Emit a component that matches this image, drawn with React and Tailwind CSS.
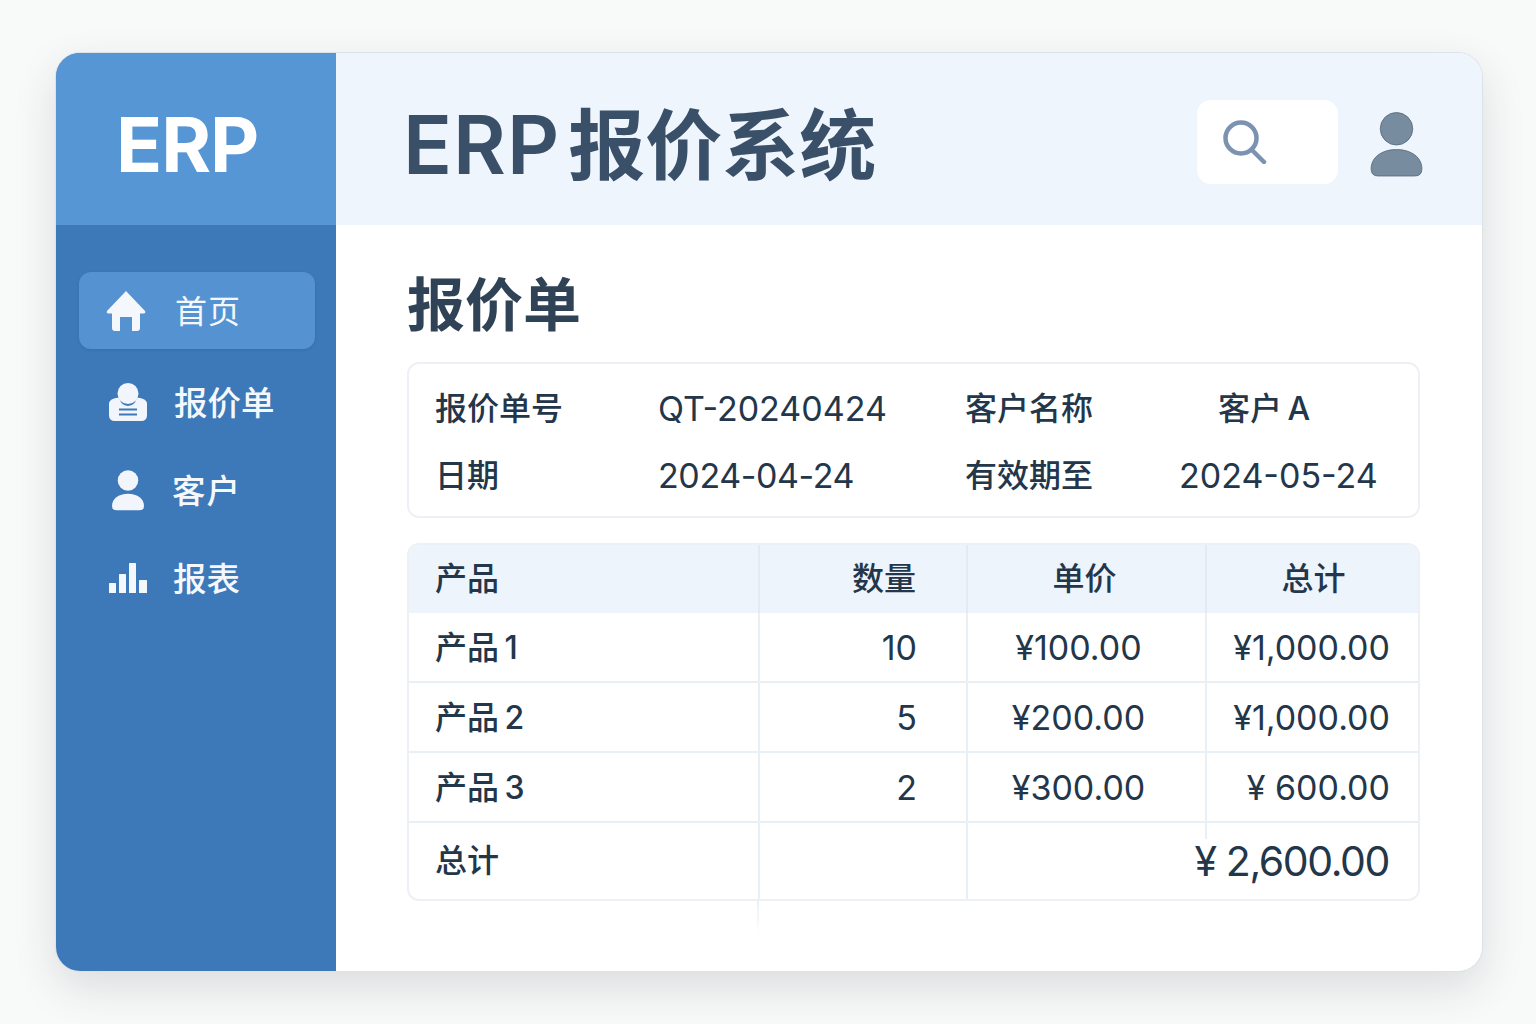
import React from "react";

const font = "font-['Inter','Noto_Sans_CJK_SC',sans-serif]";
const cols = "grid grid-cols-[351px_208px_239px_1fr]";

function HomeIcon() {
  return (
    <svg width="40" height="42" viewBox="0 0 40 42" className="text-[#f4f8fd]">
      <path fill="currentColor" d="M20 1 L39 21 Q40 23.500 37.500 23.500 L34 23.500 L34 38 Q34 41 31 41 L26 41 L26 27 L14 27 L14 41 L9 41 Q6 41 6 38 L6 23.500 L2.500 23.500 Q0 23.500 1 21 Z" />
    </svg>
  );
}
function QuoteIcon() {
  return (
    <svg width="38" height="38" viewBox="0 0 38 38" className="text-[#f2f6fc]">
      <path fill="currentColor" d="M7 15 Q10 14 11 17 Q12 22 19 23 Q26 22 27 17 Q28 14 31 15 Q37 16 38 20 L38 32 Q38 38 32 38 L6 38 Q0 38 0 32 L0 20 Q1 16 7 15 Z" />
      <circle cx="19" cy="10.500" r="10.500" fill="currentColor" />
      <path d="M10 26.500 H28 M10 31.500 H28" stroke="#3d79b8" strokeWidth="1.800" />
    </svg>
  );
}
function UserIcon({ w, h, color, stroke }) {
  return (
    <svg width={w} height={h} viewBox="0 0 52 64" className={color}>
      <circle cx="26" cy="16.500" r="16" fill="currentColor" stroke={stroke || "none"} strokeWidth="0.800" />
      <path fill="currentColor" stroke={stroke || "none"} strokeWidth="0.800" d="M26 37 C41 37 51 45 51 56 Q51 63 44 63 L8 63 Q1 63 1 56 C1 45 11 37 26 37 Z" />
    </svg>
  );
}
function BarsIcon() {
  return (
    <svg width="38" height="30" viewBox="0 0 38 30" className="text-[#f4f8fd]">
      <rect x="0" y="20" width="7" height="10" rx="0.500" fill="currentColor" />
      <rect x="10" y="11" width="7" height="19" rx="0.500" fill="currentColor" />
      <rect x="20" y="0" width="7" height="30" rx="0.500" fill="currentColor" />
      <rect x="30" y="17" width="8" height="13" rx="0.500" fill="currentColor" />
    </svg>
  );
}
function SearchIcon() {
  return (
    <svg width="44" height="44" viewBox="0 0 44 44">
      <circle cx="18" cy="18" r="15.500" fill="none" stroke="#7b93b1" strokeWidth="4.500" />
      <path d="M29 30 L41 42" stroke="#7b93b1" strokeWidth="4.500" strokeLinecap="round" />
    </svg>
  );
}

function NavItem({ icon, label, className, textClass }) {
  return (
    <div className={`flex items-center h-[60px] ${className}`}>
      <div className="w-[92px] flex justify-center shrink-0">{icon}</div>
      <span className={`pt-[3px] text-[33.5px] font-medium text-[#f4f8fd] leading-none ${textClass || ""}`}>{label}</span>
    </div>
  );
}

const rows = [
  ["产品 1", "10", "¥100.00", "¥1,000.00"],
  ["产品 2", "5", "¥200.00", "¥1,000.00"],
  ["产品 3", "2", "¥300.00", "¥ 600.00"],
];

export default function App() {
  return (
    <div className={`w-[1536px] h-[1024px] bg-[#f8f9f9] pt-[53px] pl-[56px] overflow-hidden ${font}`}>
      <div className="w-[1426px] h-[918px] rounded-[24px] overflow-hidden flex bg-white shadow-[0_0_0_1px_#dde2e6,0_16px_44px_rgba(40,50,60,0.14)]">
        <aside className="w-[280px] shrink-0 bg-[#3d79b8] flex flex-col">
          <div className="h-[172px] bg-[#5796d5] flex items-center pl-[60px] pt-[10px]">
            <span className="text-[76px] font-bold text-white leading-none tracking-[-1px]">ERP</span>
          </div>
          <nav className="pt-[47px] pl-[23px] pr-[21px]">
            <div className="h-[77px] rounded-[12px] bg-[#5592d2] flex items-center pl-[27px] shadow-[0_1px_3px_rgba(30,70,120,0.2)]">
              <HomeIcon />
              <span className="ml-[29px] pt-[2px] text-[32px] text-[#f4f8fd] leading-none tracking-[1px]">首页</span>
            </div>
            <div className="-ml-[23px] pl-[26px]">
              <NavItem className="mt-[23px]" icon={<QuoteIcon />} label="报价单" />
              <NavItem className="mt-[28px]" icon={<UserIcon w={34} h={41} color="text-[#f2f6fc]" />} label="客户" textClass="-ml-[2px] tracking-[1px]" />
              <NavItem className="mt-[28px]" icon={<BarsIcon />} label="报表" textClass="-ml-[1px]" />
            </div>
          </nav>
        </aside>

        <main className="flex-1 flex flex-col min-w-0">
          <header className="h-[172px] bg-[#eff5fd] flex items-center pl-[67px] pr-[59px]">
            <h1 className="mt-[12px] font-semibold text-[#3a5068] leading-none text-[81px] tracking-[1px]">ERP<span className="ml-[8px] tracking-[0px] text-[77px]">报价系统</span></h1>
            <div className="ml-auto mt-[6px] w-[141px] h-[84px] rounded-[14px] bg-white flex items-center pl-[26px]">
              <SearchIcon />
            </div>
            <div className="ml-[32px] mt-[10px]">
              <UserIcon w={53} h={65} color="text-[#778c9f]" stroke="#56697a" />
            </div>
          </header>

          <div className="relative pl-[71px] pr-[62px] pt-[48px]">
            <h2 className="text-[58px] font-bold text-[#2f4256] leading-[64px]">报价单</h2>

            <section className="mt-[25px] h-[156px] rounded-[12px] border-2 border-[#edf1f5] pl-[26px] pt-[11px] text-[#23364a] grid grid-cols-[223px_307px_214px_1fr] grid-rows-[67px_67px] items-center text-[34px] leading-none">
              <span className="text-[32px] font-medium">报价单号</span>
              <span>QT-20240424</span>
              <span className="text-[32px] font-medium">客户名称</span>
              <span className="ml-[39px] text-[32px] font-medium [word-spacing:-3px]">客户 A</span>
              <span className="text-[32px] font-medium">日期</span>
              <span className="tracking-[-0.4px]">2024-04-24</span>
              <span className="text-[32px] font-medium">有效期至</span>
              <span>2024-05-24</span>
            </section>

            <section className="relative mt-[25px] rounded-[12px] border-2 border-[#edf1f5] overflow-hidden text-[#23364a] text-[34px] leading-none">
              <div className={`${cols} h-[68px] bg-[#eef4fb] text-[32px] font-medium`}>
                <div className="flex items-center pl-[26px] border-r-2 border-[#e3eaf2]">产品</div>
                <div className="flex items-center justify-end pr-[50px] border-r-2 border-[#e3eaf2]">数量</div>
                <div className="flex items-center justify-center pr-[4px] border-r-2 border-[#e3eaf2]">单价</div>
                <div className="flex items-center justify-center pl-[2px]">总计</div>
              </div>
              {rows.map((r) => (
                <div key={r[0]} className={`${cols} h-[70px] border-b-2 border-[#e8eff5]`}>
                  <div className="flex items-center pl-[26px] pt-[2px] border-r-2 border-[#e8eff5] text-[32px] font-medium [word-spacing:-3px]">{r[0]}</div>
                  <div className="flex items-center justify-end pr-[49px] pt-[2px] border-r-2 border-[#e8eff5]">{r[1]}</div>
                  <div className="flex items-center justify-center pr-[16px] pt-[2px] border-r-2 border-[#e8eff5]">{r[2]}</div>
                  <div className="flex items-center justify-end pr-[28px] pt-[2px]">{r[3]}</div>
                </div>
              ))}
              <div className="grid grid-cols-[351px_208px_1fr] h-[76px]">
                <div className="flex items-center pl-[26px] border-r-2 border-[#e8eff5] text-[32px] font-medium">总计</div>
                <div className="border-r-2 border-[#e8eff5]" />
                <div className="flex items-center justify-end pr-[29px] text-[41px] tracking-[-1.4px]">¥ 2,600.00</div>
              </div>
              <div className="absolute left-[796px] top-[278px] w-[2px] h-[16px] bg-[#e8eff5]" />
            </section>
            <div className="absolute left-[421px] top-[674px] w-[2px] h-[36px] bg-gradient-to-b from-[#e8eff5] to-white" />
          </div>
        </main>
      </div>
    </div>
  );
}
